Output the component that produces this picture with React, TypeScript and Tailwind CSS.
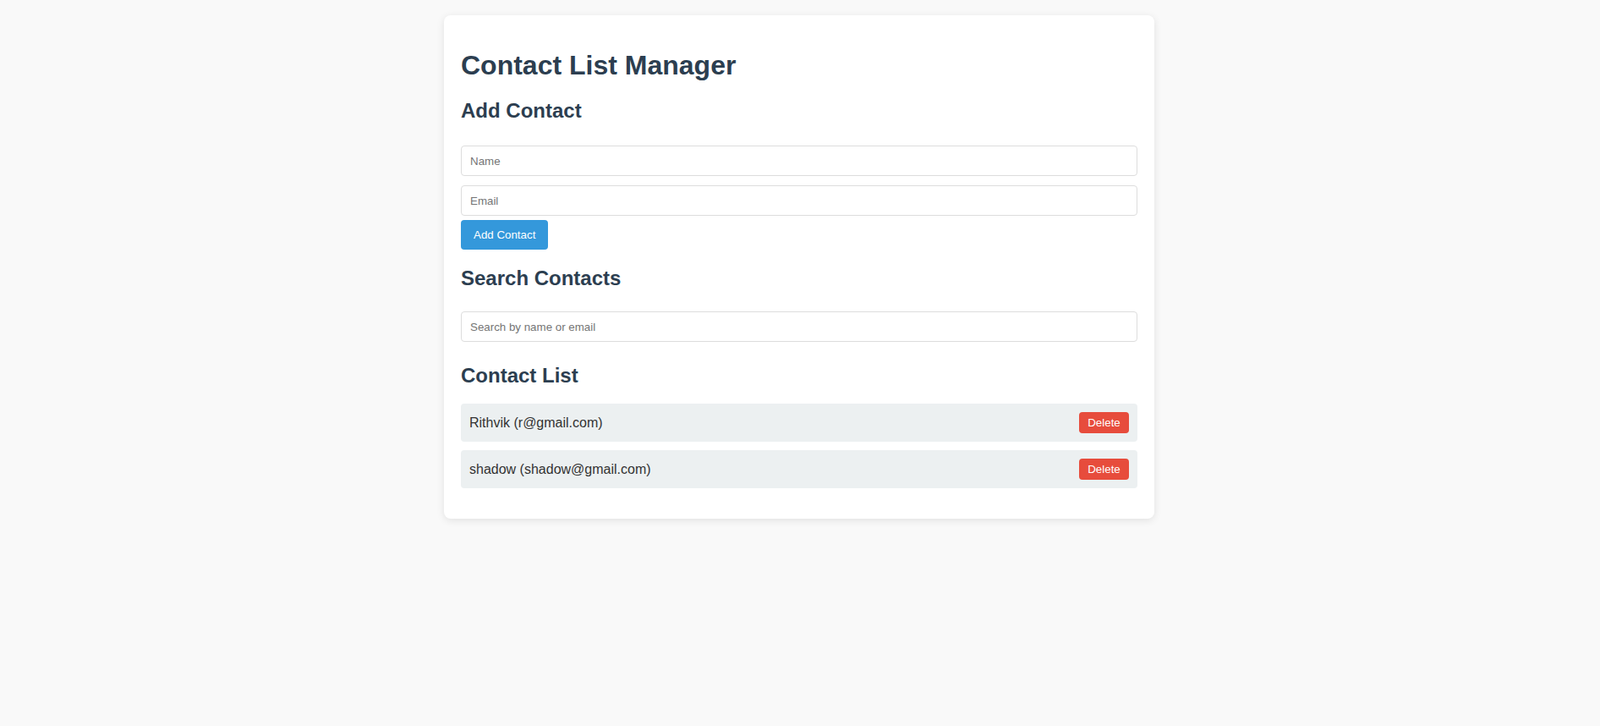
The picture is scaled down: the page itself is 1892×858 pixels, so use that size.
import { useState } from 'react';

type Contact = { id: number; name: string; email: string };

const INITIAL: Contact[] = [
  { id: 1, name: 'Rithvik', email: 'r@gmail.com' },
  { id: 2, name: 'shadow', email: 'shadow@gmail.com' },
];

const inputCls =
  'block w-full h-[36px] px-[10px] border border-[#dddddd] rounded-[4px] bg-white text-[13.33px] text-[#333] placeholder:text-[#757575] outline-none';

export default function App() {
  const [contacts, setContacts] = useState<Contact[]>(INITIAL);
  const [name, setName] = useState('');
  const [email, setEmail] = useState('');
  const [query, setQuery] = useState('');

  const addContact = () => {
    if (!name.trim() || !email.trim()) return;
    setContacts((c) => [...c, { id: Date.now(), name: name.trim(), email: email.trim() }]);
    setName('');
    setEmail('');
  };

  const shown = contacts.filter((c) => {
    const q = query.toLowerCase();
    return c.name.toLowerCase().includes(q) || c.email.toLowerCase().includes(q);
  });

  return (
    <div className="min-h-screen bg-[#f9f9f9] pt-[18px] font-['Liberation_Sans',Arial,sans-serif]">
      <div className="mx-auto w-[840px] -translate-x-px bg-white rounded-[8px] shadow-[0_2px_10px_rgba(0,0,0,0.1)] px-5 pt-5 pb-9">
        <h1 className="mt-[21px] mb-[22px] text-[32px] leading-[36px] font-bold text-[#2c3e50]">
          Contact List Manager
        </h1>

        {/* Add form */}
        <h2 className="text-[24px] leading-[27px] font-bold text-[#2c3e50]">Add Contact</h2>
        <input
          className={`${inputCls} mt-[28px]`}
          placeholder="Name"
          value={name}
          onChange={(e) => setName(e.target.value)}
        />
        <input
          className={`${inputCls} mt-[11px]`}
          placeholder="Email"
          value={email}
          onChange={(e) => setEmail(e.target.value)}
        />
        <button
          onClick={addContact}
          className="mt-[5px] h-[35px] px-[15px] rounded-[4px] bg-[#3498db] text-white text-[13.33px] leading-none"
        >
          Add Contact
        </button>

        {/* Search */}
        <h2 className="mt-[20px] text-[24px] leading-[27px] font-bold text-[#2c3e50]">Search Contacts</h2>
        <input
          className={`${inputCls} mt-[26px]`}
          placeholder="Search by name or email"
          value={query}
          onChange={(e) => setQuery(e.target.value)}
        />

        {/* List */}
        <h2 className="mt-[26px] text-[24px] leading-[27px] font-bold text-[#2c3e50]">Contact List</h2>
        <ul className="mt-[20px] flex flex-col gap-[10px]">
          {shown.map((c) => (
            <li
              key={c.id}
              className="flex items-center justify-between h-[45px] px-[10px] rounded-[4px] bg-[#ecf0f1] text-[16px] text-[#333]"
            >
              <span>
                {c.name} ({c.email})
              </span>
              <button
                onClick={() => setContacts((all) => all.filter((x) => x.id !== c.id))}
                className="h-[25px] w-[59px] rounded-[4px] bg-[#e74c3c] text-white text-[13.33px] leading-none"
              >
                Delete
              </button>
            </li>
          ))}
        </ul>
      </div>
    </div>
  );
}
